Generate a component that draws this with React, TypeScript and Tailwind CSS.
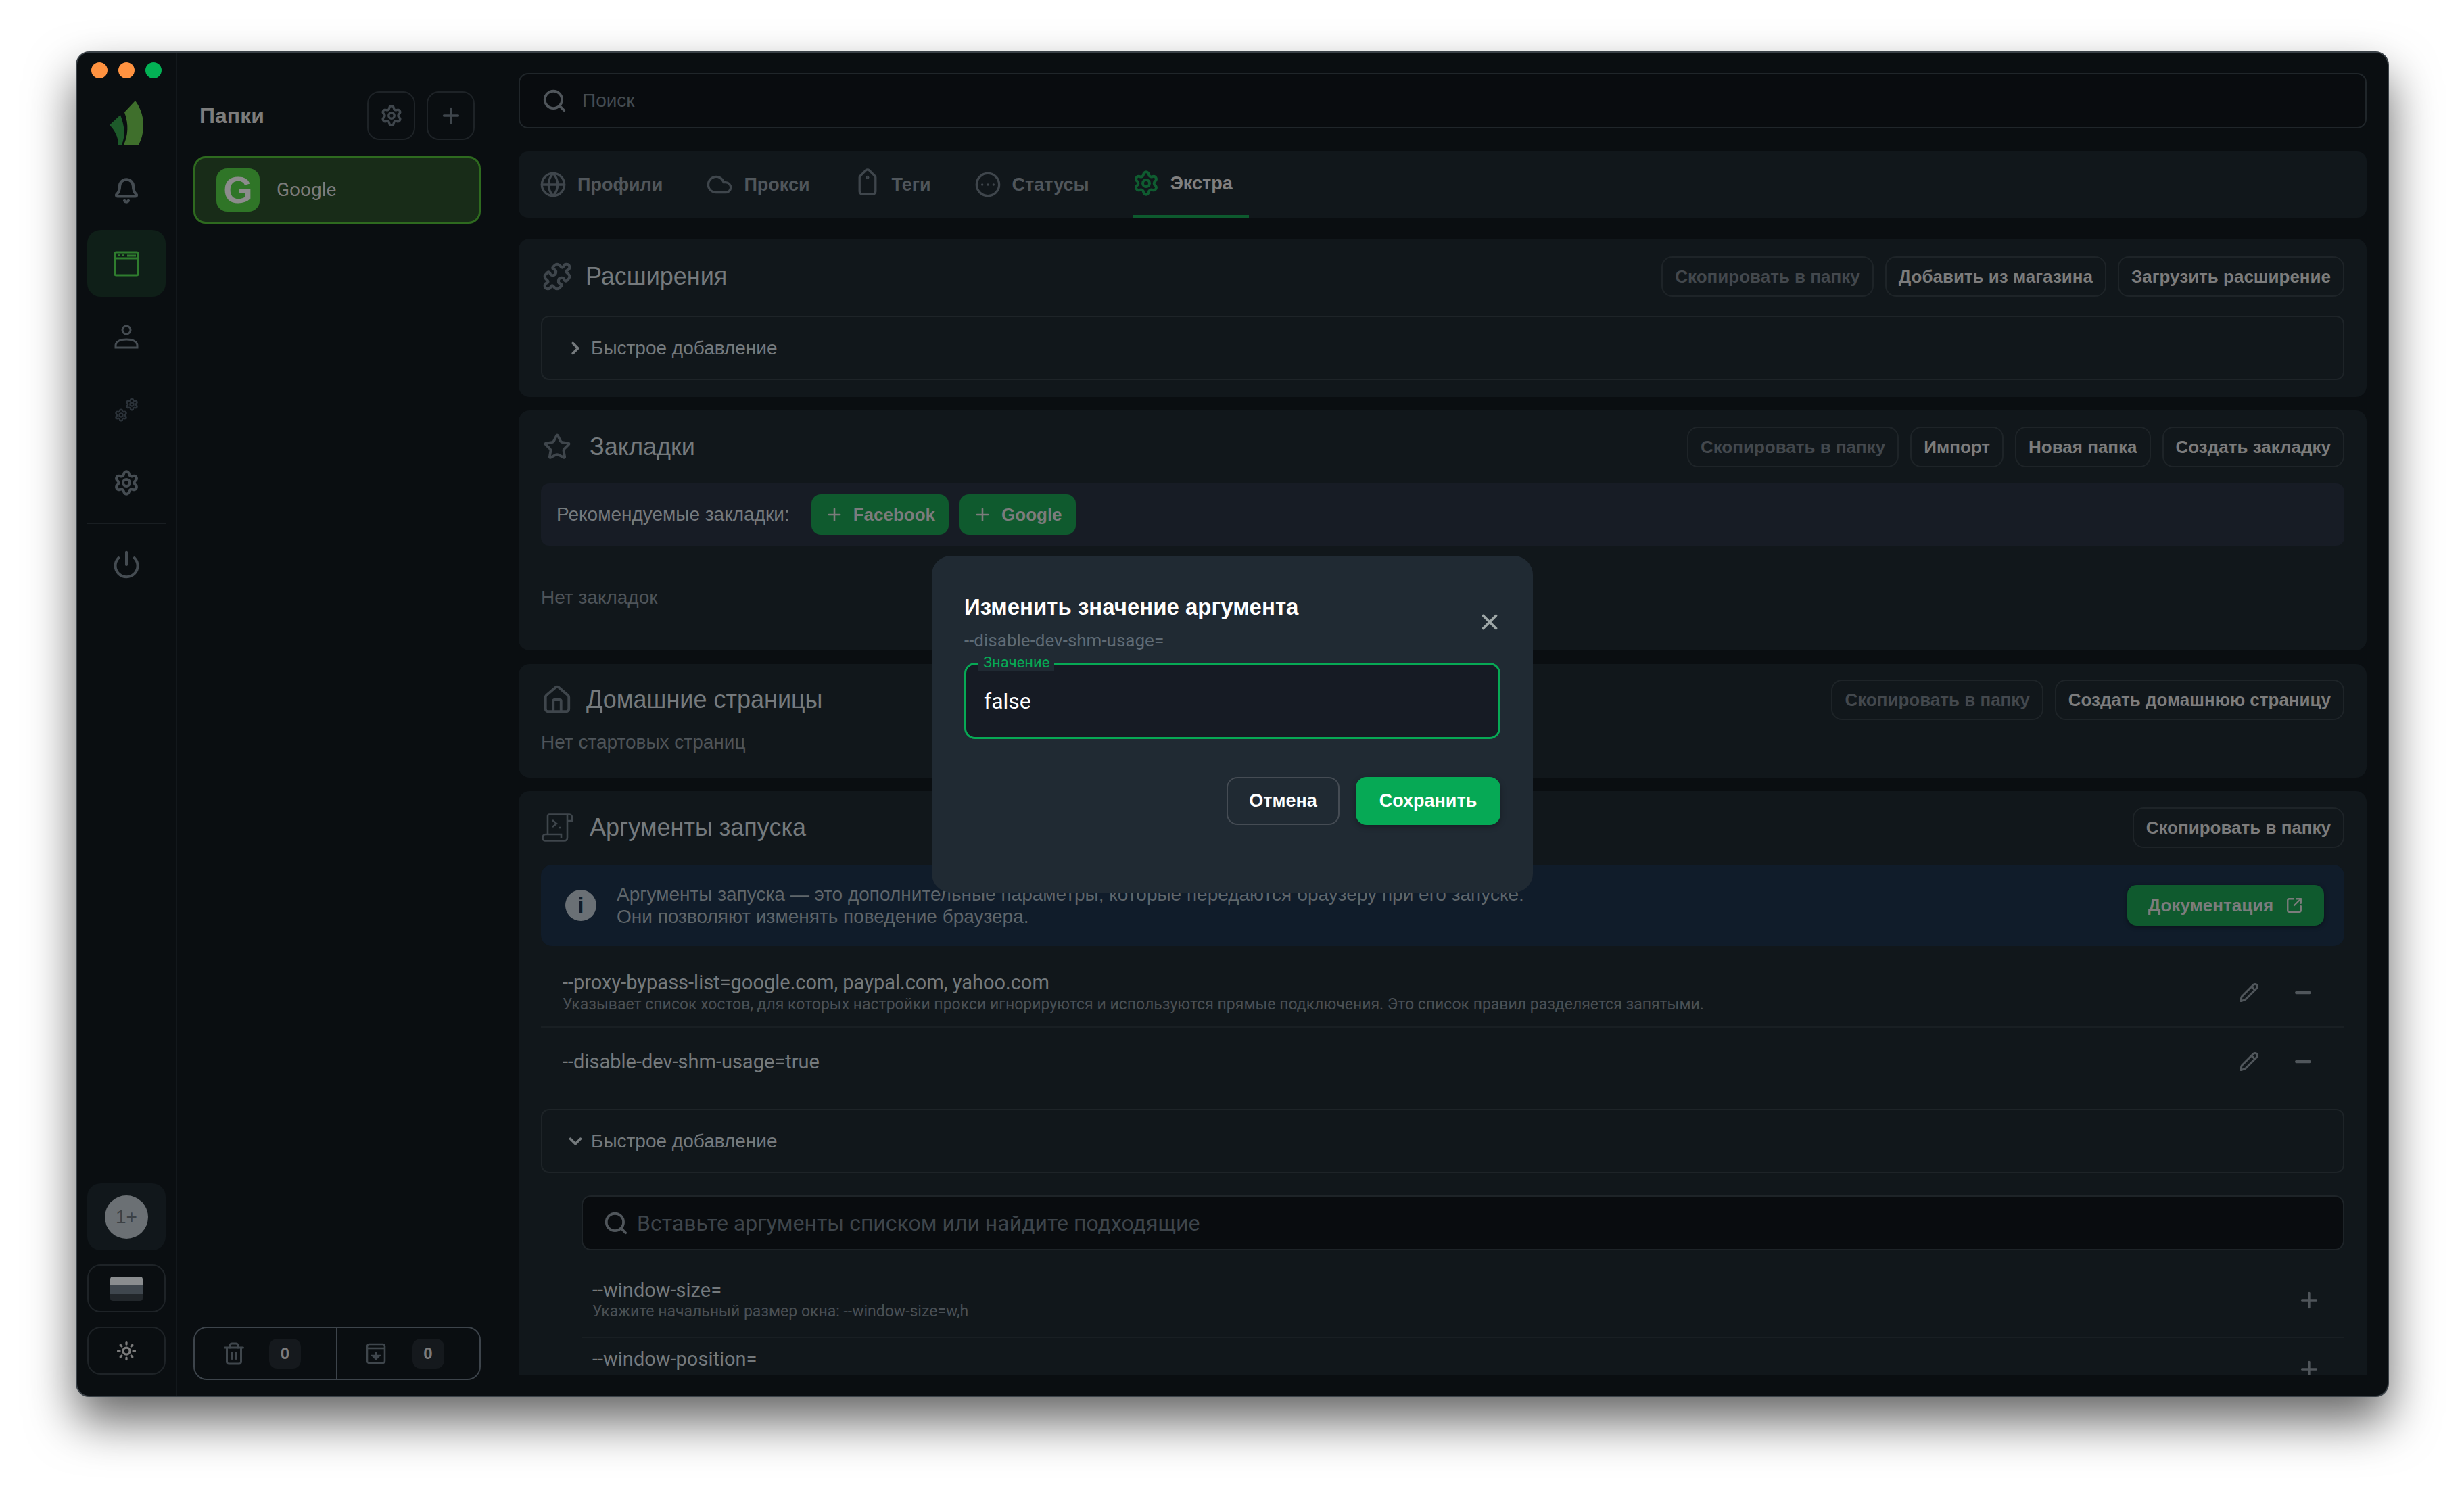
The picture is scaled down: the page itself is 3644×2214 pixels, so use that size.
import type { ReactNode } from "react";
import {
  Bell,
  ChevronDown,
  ChevronRight,
  CircleEllipsis,
  Cloud,
  Globe,
  House,
  Minus,
  Pencil,
  Plus,
  Power,
  Puzzle,
  Search,
  Settings,
  SquareArrowOutUpRight,
  Star,
  Sun,
  Tag,
  Trash2,
  X,
} from "lucide-react";

function Logo() {
  return (
    <svg width="50" height="65" viewBox="0 0 50 65">
      <path d="M22 17 L38 0 C44 8 50 20 50 36 C50 48 47 58 43 65 L21 65 C27 52 29 36 22 17Z" fill="#3f6f2c" />
      <path d="M0 36 L16 21 C22 36 24 52 18 65 L13 65 C13 54 8 44 0 36Z" fill="#1d5a2a" />
    </svg>
  );
}

function BrowserIcon() {
  return (
    <svg width="38" height="38" viewBox="0 0 38 38" fill="none" stroke="#2f7d2e" strokeWidth="3">
      <rect x="2" y="2" width="34" height="34" rx="2" />
      <path d="M2 11H36" />
      <circle cx="8" cy="6.5" r="1.6" fill="#2f7d2e" stroke="none" />
      <circle cx="14" cy="6.5" r="1.6" fill="#2f7d2e" stroke="none" />
      <path d="M20 7H33" />
    </svg>
  );
}

function UserIcon() {
  return (
    <svg width="36" height="36" viewBox="0 0 36 36" fill="none" stroke="#454c52" strokeWidth="3">
      <circle cx="18" cy="8" r="6" />
      <path d="M2 34V31C2 25 9 22 18 22C27 22 34 25 34 31V34Z" />
    </svg>
  );
}

function ArchiveIcon() {
  return (
    <svg width="30" height="32" viewBox="0 0 30 32" fill="none" stroke="#3f464c" strokeWidth="2.6">
      <rect x="2" y="2" width="26" height="28" rx="3" />
      <path d="M2 8H28" />
      <path d="M15 13V22" />
      <path d="M10 19L15 24L20 19Z" fill="#3f464c" />
    </svg>
  );
}

function ScriptIcon() {
  return (
    <svg width="46" height="42" viewBox="0 0 46 42" fill="none" stroke="#3f464c" strokeWidth="2.6">
      <path d="M9 30V4C9 2.5 10 1.5 11.500 1.500H41C43.500 1.500 45 3.500 45 6V11H38" />
      <path d="M38 1.500V36C38 39 36 40.500 33 40.500H5C2.500 40.500 1.500 38.500 1.500 36.500C1.500 33 3 31 6 31H29V36" />
      <path d="M16 10L22 15L16 20" />
      <path d="M25 21H28" />
    </svg>
  );
}

function Btn({ children, dim }: { children: ReactNode; dim?: boolean }) {
  return (
    <button className={`h-[60px] rounded-[16px] border-2 border-[#1e2428] px-[18px] text-[26px] font-bold whitespace-nowrap ${dim ? "text-[#43484d]" : "text-[#7c7c7c]"}`}>
      {children}
    </button>
  );
}

function SectionHead({ icon, title, titleClass, children }: { icon: ReactNode; title: string; titleClass: string; children?: ReactNode }) {
  return (
    <div className="flex items-center justify-between">
      <div className="flex items-center">
        <div className="flex w-[48px] justify-center text-[#3f464c]">{icon}</div>
        <h2 className={`text-[36px] text-[#757a7d] ${titleClass}`}>{title}</h2>
      </div>
      <div className="flex gap-[17px]">{children}</div>
    </div>
  );
}

function QuickAdd({ open }: { open?: boolean }) {
  return (
    <div className="flex h-[95px] items-center rounded-[12px] border-2 border-[#1e2428] pl-[34px] text-[28px] text-[#757a7d]">
      {open ? <ChevronDown size={30} strokeWidth={3} /> : <ChevronRight size={30} strokeWidth={3} />}
      <span className="ml-[8px]">Быстрое добавление</span>
    </div>
  );
}

function ArgRow({ name, desc, last }: { name: string; desc?: string; last?: boolean }) {
  return (
    <div className={`flex items-center justify-between pl-[32px] pr-[44px] ${last ? "h-[100px]" : "h-[103px] border-b-2 border-[#191f23]"}`}>
      <div>
        <div className="font-['Roboto'] text-[29px] leading-[34px] text-[#757a7d]">{name}</div>
        {desc && <div className="mt-[2px] font-['Roboto'] text-[23px] leading-[28px] text-[#4a5055]">{desc}</div>}
      </div>
      <div className="flex items-center gap-[48px] text-[#50565b]">
        <Pencil size={30} strokeWidth={2.4} />
        <Minus size={34} strokeWidth={3} />
      </div>
    </div>
  );
}

const railItems = [
  { key: "bell", node: <Bell size={40} color="#454c52" strokeWidth={2.6} /> },
  { key: "browser", node: <BrowserIcon />, active: true },
  { key: "user", node: <UserIcon /> },
  {
    key: "gears",
    node: (
      <div className="flex h-[36px] w-[36px]">
        <Settings size={20} color="#2b3239" strokeWidth={3} className="self-end" />
        <Settings size={20} color="#2b3239" strokeWidth={3} className="-ml-[4px] self-start" />
      </div>
    ),
  },
  { key: "settings", node: <Settings size={40} color="#454c52" strokeWidth={2.4} /> },
];

const tabs = [
  { label: "Профили", icon: <Globe size={40} strokeWidth={2} />, ml: "ml-[31px]" },
  { label: "Прокси", icon: <Cloud size={40} strokeWidth={2} />, ml: "ml-[64px]" },
  { label: "Теги", icon: <Tag size={40} strokeWidth={2} className="rotate-[45deg]" />, ml: "ml-[65px]" },
  { label: "Статусы", icon: <CircleEllipsis size={40} strokeWidth={2} />, ml: "ml-[64px]" },
];

export default function App() {
  return (
    <div className="h-[2214px] w-[3644px] overflow-hidden bg-white pl-[112px] pt-[76px] font-['Liberation_Sans',sans-serif]">
      <div className="relative flex h-[1990px] w-[3421px] overflow-hidden rounded-[20px] border-2 border-[#3b4248] bg-[#0a0e11] shadow-[0_36px_70px_rgba(0,0,0,0.6)]">
        {/* rail */}
        <aside className="flex w-[148px] shrink-0 flex-col items-center border-r-2 border-[#13181c]">
          <div className="mt-[14px] flex gap-[16px]">
            <span className="h-[24px] w-[24px] rounded-full bg-[#ff9240]" />
            <span className="h-[24px] w-[24px] rounded-full bg-[#ff9240]" />
            <span className="h-[24px] w-[24px] rounded-full bg-[#03b155]" />
          </div>
          <div className="mt-[33px]"><Logo /></div>
          <div className="mt-[18px] flex flex-col gap-[9px]">
            {railItems.map((it) => (
              <div key={it.key} className={`flex h-[99px] w-[116px] items-center justify-center rounded-[20px] ${it.active ? "bg-[#0f1f18]" : ""}`}>
                {it.node}
              </div>
            ))}
          </div>
          <div className="mt-[10px] h-[2px] w-[116px] bg-[#191e22]" />
          <div className="mt-[10px] flex h-[99px] w-[116px] items-center justify-center">
            <Power size={44} color="#454c52" strokeWidth={2.2} />
          </div>

          <div className="mt-auto mb-[31px] flex flex-col gap-[21px]">
            <div className="flex h-[99px] w-[116px] items-center justify-center rounded-[20px] bg-[#11171b]">
              <div className="flex h-[64px] w-[64px] items-center justify-center rounded-full bg-[#6b7074] text-[28px] text-[#3c4145]">1+</div>
            </div>
            <div className="flex h-[71px] w-[116px] items-center justify-center rounded-[20px] border-2 border-[#1e2327]">
              <div className="flex h-[36px] w-[48px] flex-col overflow-hidden rounded-[4px]">
                <div className="h-[12px] bg-[#8a8d8f]" />
                <div className="h-[14px] bg-[#3f474e]" />
                <div className="h-[10px] bg-[#22272b]" />
              </div>
            </div>
            <div className="flex h-[71px] w-[116px] items-center justify-center rounded-[20px] border-2 border-[#1e2327]">
              <Sun size={30} color="#7c7c7c" strokeWidth={2.6} />
            </div>
          </div>
        </aside>

        {/* folders */}
        <aside className="flex w-[473px] shrink-0 flex-col px-[24px]">
          <div className="mt-[57px] flex items-center justify-between pl-[9px] pr-[9px]">
            <h1 className="text-[32px] font-bold text-[#7c7c7c]">Папки</h1>
            <div className="flex gap-[17px]">
              <button className="flex h-[72px] w-[71px] items-center justify-center rounded-[18px] border-2 border-[#1e2327] text-[#3f464c]">
                <Settings size={34} strokeWidth={2.4} />
              </button>
              <button className="flex h-[72px] w-[71px] items-center justify-center rounded-[18px] border-2 border-[#1e2327] text-[#3f464c]">
                <Plus size={36} strokeWidth={2.2} />
              </button>
            </div>
          </div>
          <div className="mt-[24px] flex h-[100px] items-center rounded-[18px] border-[3px] border-[#2e6a1f] bg-[#182c18] pl-[31px]">
            <div className="flex h-[64px] w-[64px] items-center justify-center rounded-[16px] bg-[#2f7527] text-[56px] font-bold text-[#8c8c8c]">G</div>
            <span className="ml-[25px] font-['Roboto'] text-[28px] text-[#7c7c7c]">Google</span>
          </div>
          <div className="mt-auto mb-[23px] flex h-[79px] rounded-[20px] border-2 border-[#3d444b]">
            <div className="flex flex-1 items-center border-r-2 border-[#3d444b] pl-[40px]">
              <Trash2 size={36} color="#3f464c" strokeWidth={2} />
              <span className="ml-[34px] flex h-[44px] w-[47px] items-center justify-center rounded-[12px] bg-[#15191d] text-[24px] font-bold text-[#7c7c7c]">0</span>
            </div>
            <div className="flex flex-1 items-center pl-[42px]">
              <ArchiveIcon />
              <span className="ml-[39px] flex h-[44px] w-[47px] items-center justify-center rounded-[12px] bg-[#15191d] text-[24px] font-bold text-[#7c7c7c]">0</span>
            </div>
          </div>
        </aside>

        {/* main */}
        <main className="flex min-w-0 flex-1 flex-col pb-[30px] pl-[32px] pr-[31px] pt-[30px]">
          <div className="flex h-[82px] shrink-0 items-center rounded-[14px] border-2 border-[#20262a] bg-[#090c0f] pl-[32px]">
            <Search size={38} color="#50565b" strokeWidth={2.4} />
            <span className="ml-[22px] text-[28px] text-[#444b50]">Поиск</span>
          </div>

          <nav className="relative mt-[34px] flex h-[98px] shrink-0 items-center rounded-[14px] bg-[#11171b] text-[#3f464c]">
            {tabs.map((t) => (
              <div key={t.label} className={`flex items-center gap-[16px] ${t.ml}`}>
                {t.icon}
                <span className="text-[27px] font-bold text-[#50565b]">{t.label}</span>
              </div>
            ))}
            <div className="ml-[64px] flex h-full w-[172px] items-center gap-[16px] border-b-4 border-[#0d5a2e] pl-0">
              <Settings size={40} color="#0f5c30" strokeWidth={2.4} />
              <span className="text-[27px] font-bold text-[#808080]">Экстра</span>
            </div>
          </nav>

          <div className="mt-[31px] flex min-h-0 flex-1 flex-col gap-[20px] overflow-hidden">
            <section className="shrink-0 rounded-[16px] bg-[#11171b] px-[33px] pb-[25px] pt-[26px]">
              <SectionHead icon={<Puzzle size={44} strokeWidth={2.2} />} title="Расширения" titleClass="ml-[18px]">
                <Btn dim>Скопировать в папку</Btn>
                <Btn>Добавить из магазина</Btn>
                <Btn>Загрузить расширение</Btn>
              </SectionHead>
              <div className="mt-[28px]"><QuickAdd /></div>
            </section>

            <section className="h-[355px] shrink-0 rounded-[16px] bg-[#11171b] px-[33px] pt-[24px]">
              <SectionHead icon={<Star size={42} strokeWidth={2.2} />} title="Закладки" titleClass="ml-[24px]">
                <Btn dim>Скопировать в папку</Btn>
                <Btn>Импорт</Btn>
                <Btn>Новая папка</Btn>
                <Btn>Создать закладку</Btn>
              </SectionHead>
              <div className="mt-[24px] flex h-[92px] items-center rounded-[12px] bg-[#171c25] pl-[23px]">
                <span className="text-[28px] text-[#757a7d]">Рекомендуемые закладки:</span>
                <div className="ml-[32px] flex gap-[16px]">
                  {["Facebook", "Google"].map((n) => (
                    <button key={n} className="flex h-[60px] items-center gap-[14px] rounded-[14px] bg-[#0f5a2e] pl-[20px] pr-[20px] text-[26px] font-bold text-[#7c7c7c]">
                      <Plus size={28} strokeWidth={2.2} />
                      {n}
                    </button>
                  ))}
                </div>
              </div>
              <p className="mt-[56px] text-[28px] text-[#4e5459]">Нет закладок</p>
            </section>

            <section className="h-[168px] shrink-0 rounded-[16px] bg-[#11171b] px-[33px] pt-[23px]">
              <SectionHead icon={<House size={46} strokeWidth={2} />} title="Домашние страницы" titleClass="ml-[19px]">
                <Btn dim>Скопировать в папку</Btn>
                <Btn>Создать домашнюю страницу</Btn>
              </SectionHead>
              <p className="mt-[12px] text-[28px] text-[#4e5459]">Нет стартовых страниц</p>
            </section>

            <section className="shrink-0 rounded-t-[16px] bg-[#11171b] px-[33px] pt-[24px]">
              <SectionHead icon={<ScriptIcon />} title="Аргументы запуска" titleClass="ml-[24px]">
                <Btn>Скопировать в папку</Btn>
              </SectionHead>
              <div className="mt-[25px] flex h-[120px] items-center justify-between rounded-[16px] bg-[#101c2a] pl-[36px] pr-[30px]">
                <div className="flex items-center gap-[30px]">
                  <div className="flex h-[46px] w-[46px] items-center justify-center rounded-full bg-[#6a7075] text-[32px] font-bold text-[#101c2a]">i</div>
                  <p className="text-[28px] leading-[33px] text-[#5f666b]">
                    Аргументы запуска — это дополнительные параметры, которые передаются браузеру при его запуске.
                    <br />
                    Они позволяют изменять поведение браузера.
                  </p>
                </div>
                <button className="flex h-[60px] w-[291px] items-center justify-center gap-[18px] rounded-[14px] bg-[#0f5a2e] text-[26px] font-bold text-[#7c7c7c] shadow-[0_2px_6px_rgba(0,0,0,0.4)]">
                  Документация
                  <SquareArrowOutUpRight size={26} strokeWidth={2.2} />
                </button>
              </div>

              <div className="mt-[18px]">
                <ArgRow
                  name="--proxy-bypass-list=google.com, paypal.com, yahoo.com"
                  desc="Указывает список хостов, для которых настройки прокси игнорируются и используются прямые подключения. Это список правил разделяется запятыми."
                />
                <ArgRow name="--disable-dev-shm-usage=true" last />
              </div>

              <div className="mt-[20px]"><QuickAdd open /></div>

              <div className="ml-[60px] mt-[33px] flex h-[81px] items-center rounded-[14px] border-2 border-[#1e2428] bg-[#090c0f] pl-[30px]">
                <Search size={38} color="#50565b" strokeWidth={2.4} />
                <span className="ml-[12px] font-['Roboto'] text-[32px] text-[#3e454b]">Вставьте аргументы списком или найдите подходящие</span>
              </div>

              <div className="ml-[60px] mt-[38px] flex h-[92px] items-center justify-between border-b-2 border-[#191f23] pb-[18px] pl-[16px] pr-[34px]">
                <div>
                  <div className="font-['Roboto'] text-[29px] leading-[34px] text-[#757a7d]">--window-size=</div>
                  <div className="font-['Roboto'] text-[23px] leading-[30px] text-[#4a5055]">Укажите начальный размер окна: --window-size=w,h</div>
                </div>
                <Plus size={36} color="#50565b" strokeWidth={2.2} />
              </div>
              <div className="ml-[60px] flex items-start justify-between pl-[16px] pr-[34px] pt-[14px]">
                <div className="font-['Roboto'] text-[29px] leading-[34px] text-[#757a7d]">--window-position=</div>
                <Plus size={36} color="#50565b" strokeWidth={2.2} className="mt-[14px]" />
              </div>
            </section>
          </div>
        </main>

        {/* dialog */}
        <div className="absolute inset-0 flex items-center justify-center">
          <div className="h-[498px] w-[889px] rounded-[28px] bg-[#202a33] px-[48px] pt-[56px]">
            <div className="flex items-start justify-between">
              <div>
                <h3 className="text-[33px] font-bold leading-[40px] text-white">Изменить значение аргумента</h3>
                <p className="mt-[9px] font-['Roboto'] text-[26px] leading-[40px] text-[#5f6b75]">--disable-dev-shm-usage=</p>
              </div>
              <X size={38} color="#9fa8a8" strokeWidth={2.4} className="mr-[-3px] mt-[23px]" />
            </div>
            <div className="relative mt-[13px] flex h-[113px] items-center rounded-[16px] border-[3px] border-[#07a955] bg-[#161b24] pl-[26px]">
              <span className="absolute -top-[16px] left-[18px] bg-[#202a33] px-[7px] font-['Roboto'] text-[22px] leading-[26px] text-[#07a955]">Значение</span>
              <span className="font-['Roboto'] text-[32px] text-white">false</span>
            </div>
            <div className="mt-[56px] flex justify-end gap-[24px]">
              <button className="h-[71px] w-[167px] rounded-[16px] border-2 border-[#454c54] text-[27px] font-bold text-white">Отмена</button>
              <button className="h-[71px] w-[214px] rounded-[16px] bg-[#06a955] text-[27px] font-bold text-white shadow-[0_3px_8px_rgba(0,0,0,0.3)]">Сохранить</button>
            </div>
          </div>
        </div>
      </div>
    </div>
  );
}
